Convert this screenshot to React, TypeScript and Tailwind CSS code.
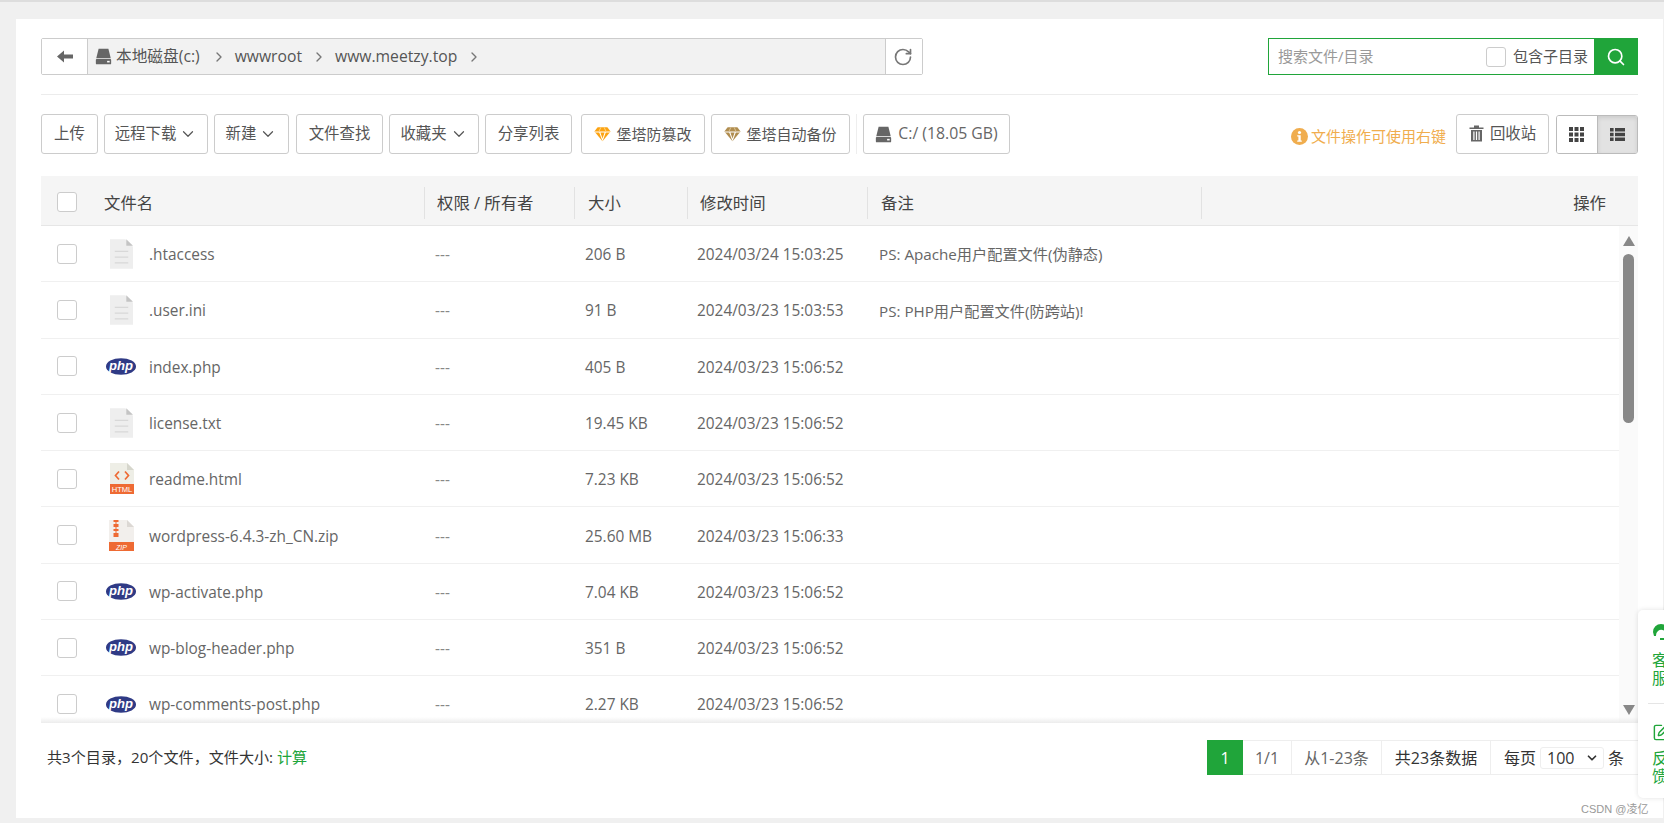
import React from "react";
import { ChevronRight, ChevronDown, RotateCw, Search, SquarePen } from "lucide-react";

const Drive = ({ c = "#666", s = 16 }: { c?: string; s?: number }) => (
  <svg width={s} height={s} viewBox="0 0 16 16" className="shrink-0">
    <path d="M3.400 .6h9.200l2.200 9H1.200z" fill={c} />
    <rect x="0.800" y="10.400" width="14.400" height="5" rx="0.800" fill={c} />
    <rect x="11.400" y="12.100" width="2.400" height="1.500" fill="#fff" />
  </svg>
);

const Diamond = ({ c, d }: { c: string; d: string }) => (
  <svg width="17" height="16" viewBox="0 0 17 16" className="shrink-0 mr-[2px]">
    <path d="M3.600 1.200h9.800l3.200 4.400-8.100 9.600L.4 5.600z" fill={c} />
    <path d="M.4 5.600h16.200v.9H.9z M5.200 6.500l3.300 8.700 3.300-8.700h-1.200l-2.100 6-2.100-6z" fill="#fff" />
    <path d="M6.400 1.200h1.100l-2 4.400H4.400z M9.500 1.200h1.100l2 4.400h-1.100z" fill={d} />
  </svg>
);

const Btn = ({ w, children }: { w: string; children: React.ReactNode }) => (
  <div className={`${w} h-[40px] shrink-0 flex items-center justify-center gap-[3px] bg-white border border-[#ccc] rounded-[3px] text-[#555]`}>
    {children}
  </div>
);

const Check = () => <span className="block w-[20px] h-[20px] bg-white border border-[#ccc] rounded-[3px]" />;

const BlankIcon = () => (
  <svg width="23" height="30" viewBox="0 0 24 31">
    <path d="M0 0h16l8 8v23H0z" fill="#eeeeee" />
    <path d="M17 0l7 7h-7z" fill="#c4c4c4" />
    <path d="M5 12h14v1.400H5zM5 18h14v1.400H5zM5 24h14v1.400H5z" fill="#d8d8d8" />
  </svg>
);

const PhpIcon = () => (
  <svg width="30" height="19" viewBox="0 0 31 19" className="-translate-x-[1px]">
    <ellipse cx="15.500" cy="9.500" rx="15.500" ry="8.600" fill="#2f3a85" />
    <text x="15.500" y="13.600" textAnchor="middle" fill="#fff" fontSize="13.500" fontWeight="700" fontStyle="italic" fontFamily="'Liberation Sans',sans-serif">php</text>
  </svg>
);

const HtmlIcon = () => (
  <svg width="24" height="31" viewBox="0 0 24 31">
    <path d="M0 0h17l7 7v24H0z" fill="#eeeee6" />
    <path d="M17 0l7 7h-7z" fill="#d6d6cc" />
    <path d="M9 8.500L5.500 12.500l3.500 4M15 8.500l3.500 4-3.500 4" fill="none" stroke="#ee6a33" strokeWidth="1.700" />
    <rect y="21" width="24" height="10" fill="#ee6a33" />
    <text x="12" y="29" textAnchor="middle" fill="#fff" fontSize="7.600" fontFamily="'Liberation Sans',sans-serif">HTML</text>
  </svg>
);

const ZipIcon = () => (
  <svg width="25" height="31" viewBox="0 0 25 31">
    <path d="M0 0h18l7 7v24H0z" fill="#f2efec" />
    <path d="M18 0l7 7h-7z" fill="#dcd8d4" />
    <path d="M4.500 0h5v2h-2v2h2v3h-2v2h2v2h-2v2h2v4h-5v-4h2v-2h-2v-2h2v-2h-2V4h2V2h-2z" fill="#ee6a33" />
    <rect y="22" width="25" height="9" fill="#ee6a33" />
    <text x="12.500" y="29.500" textAnchor="middle" fill="#fff" fontSize="7" fontStyle="italic" fontFamily="'Liberation Sans',sans-serif">ZIP</text>
  </svg>
);

const rows: [string, string, string, string, string][] = [
  ["blank", ".htaccess", "206 B", "2024/03/24 15:03:25", "PS: Apache用户配置文件(伪静态)"],
  ["blank", ".user.ini", "91 B", "2024/03/23 15:03:53", "PS: PHP用户配置文件(防跨站)!"],
  ["php", "index.php", "405 B", "2024/03/23 15:06:52", ""],
  ["blank", "license.txt", "19.45 KB", "2024/03/23 15:06:52", ""],
  ["html", "readme.html", "7.23 KB", "2024/03/23 15:06:52", ""],
  ["zip", "wordpress-6.4.3-zh_CN.zip", "25.60 MB", "2024/03/23 15:06:33", ""],
  ["php", "wp-activate.php", "7.04 KB", "2024/03/23 15:06:52", ""],
  ["php", "wp-blog-header.php", "351 B", "2024/03/23 15:06:52", ""],
  ["php", "wp-comments-post.php", "2.27 KB", "2024/03/23 15:06:52", ""],
];

const Sep = () => <span className="block w-px h-[32px] bg-[#e2e2e2] shrink-0" />;

export default function App() {
  return (
    <div className="relative w-[1664px] h-[823px] overflow-hidden bg-[#f0f0f0] border-t-2 border-[#dddddd] pt-[17px] pl-[16px] pr-[1px] pb-[5px] font-['Open_Sans','Noto_Sans_CJK_SC',sans-serif] text-[15.4px] text-[#555]">
      <div className="h-full bg-white pt-[19px] pl-[25px] pr-[25px] flex flex-col">
        {/* address row */}
        <div className="flex justify-between items-center h-[37px] shrink-0">
          <div className="flex h-[37px] w-[882px] border border-[#ccc] rounded-[2px] bg-[#f2f2f2]">
            <div className="w-[46px] bg-white border-r border-[#ccc] flex items-center justify-center">
              <svg width="16" height="13" viewBox="0 0 16 13"><path d="M7 0.500v4h9v4H7v4L0 6.500z" fill="#666" /></svg>
            </div>
            <div className="flex-1 flex items-center pl-[7px] text-[#555] text-[15.7px]">
              <Drive s={17} />
              <span className="ml-[4px]">本地磁盘(c:)</span>
              <ChevronRight size={16} strokeWidth={2} className="text-[#777] ml-[11px] mr-[8px]" />
              <span>wwwroot</span>
              <ChevronRight size={16} strokeWidth={2} className="text-[#777] ml-[9px] mr-[8px]" />
              <span>www.meetzy.top</span>
              <ChevronRight size={16} strokeWidth={2} className="text-[#777] ml-[9px]" />
            </div>
            <div className="w-[37px] bg-white border-l border-[#ccc] flex items-center justify-center pr-[2px]">
              <RotateCw size={20} strokeWidth={2} className="text-[#777]" />
            </div>
          </div>
          <div className="flex h-[37px] w-[370px] border border-[#20a53a]">
            <div className="flex-1 flex items-center pl-[9px] pr-[6px] justify-between bg-white text-[15px]">
              <span className="text-[#999]">搜索文件/目录</span>
              <span className="flex items-center gap-[7px] text-[#555]">
                <Check />
                包含子目录
              </span>
            </div>
            <div className="w-[43px] bg-[#20a53a] flex items-center justify-center">
              <Search size={20} strokeWidth={2} className="text-white" />
            </div>
          </div>
        </div>
        <div className="h-px bg-[#ececec] mt-[19px] shrink-0" />
        {/* toolbar */}
        <div className="flex justify-between items-start mt-[19px] h-[40px] shrink-0">
          <div className="flex items-center gap-[6px]">
            <Btn w="w-[57px]">上传</Btn>
            <Btn w="w-[104px]">远程下载<ChevronDown size={18} strokeWidth={1.600} /></Btn>
            <Btn w="w-[75px]">新建<ChevronDown size={18} strokeWidth={1.600} /></Btn>
            <Btn w="w-[87px] ml-[1px]">文件查找</Btn>
            <Btn w="w-[90px]">收藏夹<ChevronDown size={18} strokeWidth={1.600} /></Btn>
            <Btn w="w-[87px]">分享列表</Btn>
            <Btn w="w-[124px] ml-[3px] text-[15px]"><Diamond c="#fca312" d="#ffd27a" />堡塔防篡改</Btn>
            <Btn w="w-[139px] text-[15px]"><Diamond c="#b08d4f" d="#d8c08e" />堡塔自动备份</Btn>
            <span className="block w-px h-[40px] bg-[#eeeeee]" />
            <Btn w="w-[147px]"><span className="mr-[3px]"><Drive s={17} /></span><span className="text-[#666] text-[15.800px]">C:/ (18.05 GB)</span></Btn>
          </div>
          <div className="flex items-center gap-[7px]">
            <span className="flex items-center gap-[3px] text-[#f0ad4e] text-[15px] mt-[4px]">
              <svg width="17" height="17" viewBox="0 0 17 17">
                <circle cx="8.500" cy="8.500" r="8.500" fill="#f0ad4e" />
                <circle cx="8.500" cy="4.500" r="1.600" fill="#fff" />
                <path d="M6.200 7.200h3.500v5.300h1.100v1.300H6.200v-1.300h1.200V8.500H6.200z" fill="#fff" />
              </svg>
              文件操作可使用右键
            </span>
            <Btn w="w-[93px] ml-[3px]">
              <svg width="15" height="17" viewBox="0 0 15 17" className="mr-[3px] -mt-[2px]">
                <path d="M0.500 2.500h14v1.400H.5zM5 .5h5v2H5z" fill="#666" />
                <path d="M2 5h11v11.500H2z" fill="#666" />
                <path d="M4.300 6.500h1.200v8.500H4.300zM6.900 6.500h1.200v8.500H6.900zM9.500 6.500h1.200v8.500H9.500z" fill="#fff" />
              </svg>
              回收站
            </Btn>
            <div className="flex w-[82px] h-[39px] border border-[#bbb] rounded-[3px] overflow-hidden">
              <div className="flex-1 bg-white flex items-center justify-center">
                <svg width="15" height="15" viewBox="0 0 15 15">
                  <path d="M0 0h4v4H0zM5.500 0h4v4h-4zM11 0h4v4h-4zM0 5.500h4v4H0zM5.500 5.500h4v4h-4zM11 5.500h4v4h-4zM0 11h4v4H0zM5.500 11h4v4h-4zM11 11h4v4h-4z" fill="#444" />
                </svg>
              </div>
              <div className="flex-1 bg-[#e2e2e2] border-l border-[#bbb] shadow-[inset_0_2px_4px_rgba(0,0,0,0.1)] flex items-center justify-center">
                <svg width="15" height="15" viewBox="0 0 15 15">
                  <path d="M0 1h3.600v3.400H0zM5 1h10v3.400H5zM0 5.800h3.600v3.400H0zM5 5.800h10v3.400H5zM0 10.600h3.600V14H0zM5 10.600h10V14H5z" fill="#444" />
                </svg>
              </div>
            </div>
          </div>
        </div>
        {/* table */}
        <div className="mt-[22px] flex-1 min-h-0 flex flex-col">
          <div className="flex items-center h-[50px] shrink-0 bg-[#f5f5f5] border-b border-[#e6e6e6] text-[#444] pt-[5px] text-[16.400px]">
            <div className="w-[63px] pl-[16px] pb-[2px] shrink-0"><Check /></div>
            <div className="flex-1 flex items-center">
              <div className="w-[321px] flex justify-between items-center"><span>文件名</span><Sep /></div>
              <div className="w-[150px] pl-[12px] flex justify-between items-center"><span>权限 / 所有者</span><Sep /></div>
              <div className="w-[113px] pl-[13px] flex justify-between items-center"><span>大小</span><Sep /></div>
              <div className="w-[180px] pl-[12px] flex justify-between items-center"><span>修改时间</span><Sep /></div>
              <div className="w-[334px] pl-[13px] flex justify-between items-center"><span>备注</span><Sep /></div>
              <div className="flex-1 text-right pr-[32px]">操作</div>
            </div>
          </div>
          <div className="relative flex h-[497px] shrink-0">
            <div className="flex-1 overflow-hidden">
              {rows.map((r) => (
                <div key={r[1]} className="flex items-center h-[56.300px] border-b border-[#f0f0f0] text-[#666]">
                  <div className="w-[63px] pl-[16px] shrink-0"><Check /></div>
                  <div className="w-[45px] flex justify-center shrink-0 -translate-x-[5px]">
                    {r[0] === "blank" && <BlankIcon />}
                    {r[0] === "php" && <PhpIcon />}
                    {r[0] === "html" && <HtmlIcon />}
                    {r[0] === "zip" && <ZipIcon />}
                  </div>
                  <div className="w-[286px] shrink-0 pt-[2px]">{r[1]}</div>
                  <div className="w-[150px] shrink-0 text-[#888] pt-[2px]">---</div>
                  <div className="w-[112px] shrink-0 pt-[2px]">{r[2]}</div>
                  <div className="w-[182px] shrink-0 pt-[2px]">{r[3]}</div>
                  <div className="pt-[2px] text-[15.200px]">{r[4]}</div>
                </div>
              ))}
            </div>
            <div className="w-[19px] shrink-0 bg-[#fafafa] flex flex-col items-center justify-between pt-[10px] pb-[8px] relative">
              <span className="block w-0 h-0 border-x-[6px] border-x-transparent border-b-[10px] border-b-[#888]" />
              <span className="absolute top-[28px] w-[11px] h-[169px] rounded-[6px] bg-[#888]" />
              <span className="block w-0 h-0 border-x-[6px] border-x-transparent border-t-[10px] border-t-[#888]" />
            </div>
            <div className="absolute left-0 right-0 bottom-0 h-[6px] bg-gradient-to-t from-[#ececec] to-transparent" />
          </div>
          {/* footer */}
          <div className="flex-1 flex justify-between items-start pt-[17px] bg-white">
            <div className="pl-[6px] pt-[6px] text-[#333] text-[15.100px]">共3个目录，20个文件，文件大小: <span className="text-[#20a53a]">计算</span></div>
            <div className="flex h-[35px] items-stretch border-y border-[#eeeeee] text-[#666] text-[16px] mr-[-2px]">
              <span className="w-[36px] bg-[#20a53a] text-white flex items-center justify-center -my-px">1</span>
              <span className="w-[49px] border-r border-[#eeeeee] flex items-center justify-center">1/1</span>
              <span className="w-[90px] border-r border-[#eeeeee] flex items-center justify-center">从1-23条</span>
              <span className="w-[109px] border-r border-[#eeeeee] flex items-center justify-center text-[#333]">共23条数据</span>
              <span className="w-[149px] flex items-center pl-[13px] text-[#333]">
                每页
                <span className="ml-[4px] mr-[4px] w-[64px] h-[22px] border border-[#eee] rounded-[3px] flex items-center justify-between pl-[6px] pr-[4px]">
                  100
                  <ChevronDown size={14} strokeWidth={3} />
                </span>
                条
              </span>
            </div>
          </div>
        </div>
      </div>
      {/* floating help widget */}
      <div className="absolute left-[1638px] top-[608px] w-[40px] h-[188px] bg-white rounded-l-[5px] shadow-[0_0_5px_rgba(0,0,0,0.12)] pl-[14px] pt-[13px] text-[#20a53a] text-[16px] leading-[18px]">
        <svg width="18" height="18" viewBox="0 0 18 18" className="block mb-[10px]">
          <path d="M1 9a8 8 0 0 1 16 0l-3 1a5 5 0 0 0-8-2 6 6 0 0 0-2 5H2z" fill="#20a53a" />
          <path d="M8 15h6v2H8z" fill="#20a53a" />
        </svg>
        <div>客</div>
        <div>服</div>
        <div className="w-[30px] h-px bg-[#e5e5e5] -ml-[4px] mt-[16px]" />
        <SquarePen size={19} strokeWidth={1.800} className="block mt-[19px] mb-[7px]" />
        <div>反</div>
        <div>馈</div>
      </div>
      <div className="absolute left-[1581px] top-[799px] text-[11px] text-[#999] font-['Liberation_Sans','Noto_Sans_CJK_SC',sans-serif]">CSDN @凌亿</div>
    </div>
  );
}
